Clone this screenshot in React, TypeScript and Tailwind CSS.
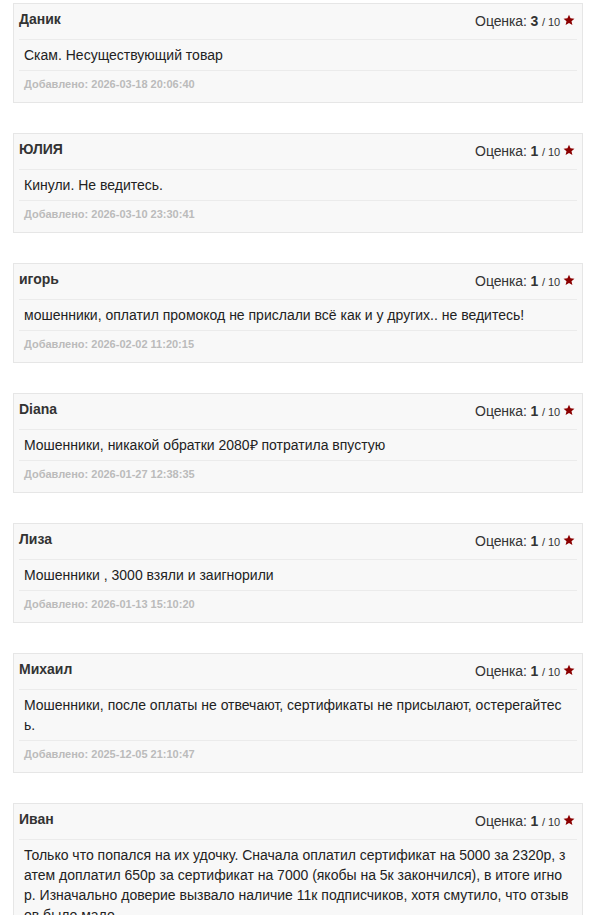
import React from 'react';

interface Review {
  name: string;
  score: number;
  text: string;
  date: string;
}

const reviews: Review[] = [
  { name: 'Даник', score: 3, text: 'Скам. Несуществующий товар', date: '2026-03-18 20:06:40' },
  { name: 'ЮЛИЯ', score: 1, text: 'Кинули. Не ведитесь.', date: '2026-03-10 23:30:41' },
  {
    name: 'игорь',
    score: 1,
    text: 'мошенники, оплатил промокод не прислали всё как и у других.. не ведитесь!',
    date: '2026-02-02 11:20:15',
  },
  { name: 'Diana', score: 1, text: 'Мошенники, никакой обратки 2080₽ потратила впустую', date: '2026-01-27 12:38:35' },
  { name: 'Лиза', score: 1, text: 'Мошенники , 3000 взяли и заигнорили', date: '2026-01-13 15:10:20' },
  {
    name: 'Михаил',
    score: 1,
    text: 'Мошенники, после оплаты не отвечают, сертификаты не присылают, остерегайтесь.',
    date: '2025-12-05 21:10:47',
  },
  {
    name: 'Иван',
    score: 1,
    text: 'Только что попался на их удочку. Сначала оплатил сертификат на 5000 за 2320р, затем доплатил 650р за сертификат на 7000 (якобы на 5к закончился), в итоге игнор. Изначально доверие вызвало наличие 11к подписчиков, хотя смутило, что отзывов было мало.',
    date: '2025-11-20 18:42:03',
  },
];

const Star = () => (
  <svg width="12" height="12" viewBox="0 0 24 24" className="ml-[3px] inline-block -mt-[3px]">
    <path
      d="M12 1.5l3.1 7.2 7.8.7-5.9 5.1 1.8 7.7L12 18.1l-6.8 4.1 1.8-7.7-5.9-5.1 7.8-.7z"
      fill="#8b0000"
    />
  </svg>
);

const ReviewCard: React.FC<{ review: Review }> = ({ review }) => (
  <div className="border border-[#e6e6e6] bg-[#f8f8f8] px-[5px] pt-[5px] pb-[5px]">
    <div className="flex h-[20px] items-center justify-between mb-[10px] leading-[20px]">
      <div className="text-[14px] font-bold text-[#333]">{review.name}</div>
      <div className="relative top-[2px] text-[14px] text-[#333] pr-[2px] tracking-[-0.1px]">
        Оценка: <b>{review.score}</b> <span className="text-[11px]">/ 10</span>
        <Star />
      </div>
    </div>
    <div className="border-t border-[#ebebeb] px-[5px] py-[5px] text-[14px] leading-[20px] text-[#222] break-all">
      {review.text}
    </div>
    <div className="border-t border-[#ebebeb] px-[5px] py-[5px] text-[11px] leading-[16px] font-bold text-[#bbb]">
      Добавлено: {review.date}
    </div>
  </div>
);

export default function App() {
  return (
    <div
      className="w-[591px] h-[915px] overflow-hidden bg-white pl-[13px] pr-[8px] pt-[3px]"
      style={{ fontFamily: '"Liberation Sans", Arial, sans-serif' }}
    >
      <div className="flex flex-col gap-[30px]">
        {reviews.map((r, i) => (
          <ReviewCard key={i} review={r} />
        ))}
      </div>
    </div>
  );
}
